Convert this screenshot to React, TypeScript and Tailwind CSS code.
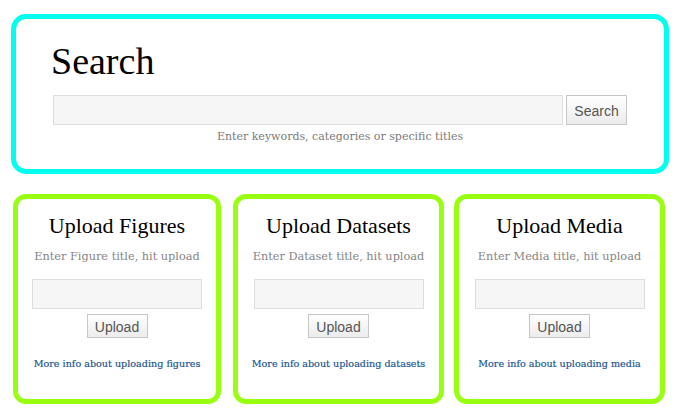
export default function App() {
  const cards = [
    { title: "Upload Figures", noun: "Figure", link: "figures", w: "w-[208px]" },
    { title: "Upload Datasets", noun: "Dataset", link: "datasets", w: "w-[211px]" },
    { title: "Upload Media", noun: "Media", link: "media", w: "w-[211px]" },
  ];

  return (
    <div className="min-h-screen bg-white pt-[14px]">
      {/* search panel */}
      <div className="ml-[11px] h-[160px] w-[658px] rounded-[15px] border-[5px] border-[#00ffee] pl-[37px] pr-[37px] pt-[23px]">
        <h1 className="-ml-[2px] text-[38px] leading-[38px] text-black [font-family:'Liberation_Serif',serif]">
          Search
        </h1>
        <div className="mt-[15px] flex gap-[3px]">
          <input className="h-[30px] w-[510px] border border-[#dedede] bg-[#f6f6f6] outline-none" />
          <button className="h-[30px] w-[61px] border border-[#c6c6c6] bg-gradient-to-b from-white to-[#ececec] pt-[3px] text-[14px] text-[#555] [font-family:'Liberation_Sans',sans-serif]">
            Search
          </button>
        </div>
        <p className="mt-[4px] text-center text-[11px] leading-[15px] text-[#7a7a7a] [font-family:'DejaVu_Serif',serif]">
          Enter keywords, categories or specific titles
        </p>
      </div>

      {/* upload cards */}
      <div className="ml-[13px] mt-[20px] flex gap-[12px]">
        {cards.map((c, i) => (
          <div
            key={c.title}
            className={`${c.w} ${i === 2 ? "-ml-[2px]" : ""} flex h-[210px] flex-col items-center rounded-[13px] border-[5px] border-[#99ff11] pt-[14px]`}
          >
            <h2 className="text-[22px] leading-[26px] text-black [font-family:'Liberation_Serif',serif]">
              {c.title}
            </h2>
            <p className="mt-[10px] text-[11.3px] leading-[16px] text-[#858585] [font-family:'DejaVu_Serif',serif]">
              Enter {c.noun} title, hit upload
            </p>
            <input className="mt-[14px] h-[30px] w-[170px] border border-[#dedede] bg-[#f6f6f6] outline-none" />
            <button className="mt-[5px] h-[24px] w-[61px] border border-[#c6c6c6] bg-gradient-to-b from-white to-[#ececec] pt-[1px] text-[14px] leading-[20px] text-[#555] [font-family:'Liberation_Sans',sans-serif]">
              Upload
            </button>
            <a
              href="#"
              className="mt-[19px] text-[9.6px] leading-[14px] text-[#1a5690] [font-family:'DejaVu_Serif',serif] [-webkit-text-stroke:0.2px_#1a5690]"
            >
              More info about uploading {c.link}
            </a>
          </div>
        ))}
      </div>
    </div>
  );
}
